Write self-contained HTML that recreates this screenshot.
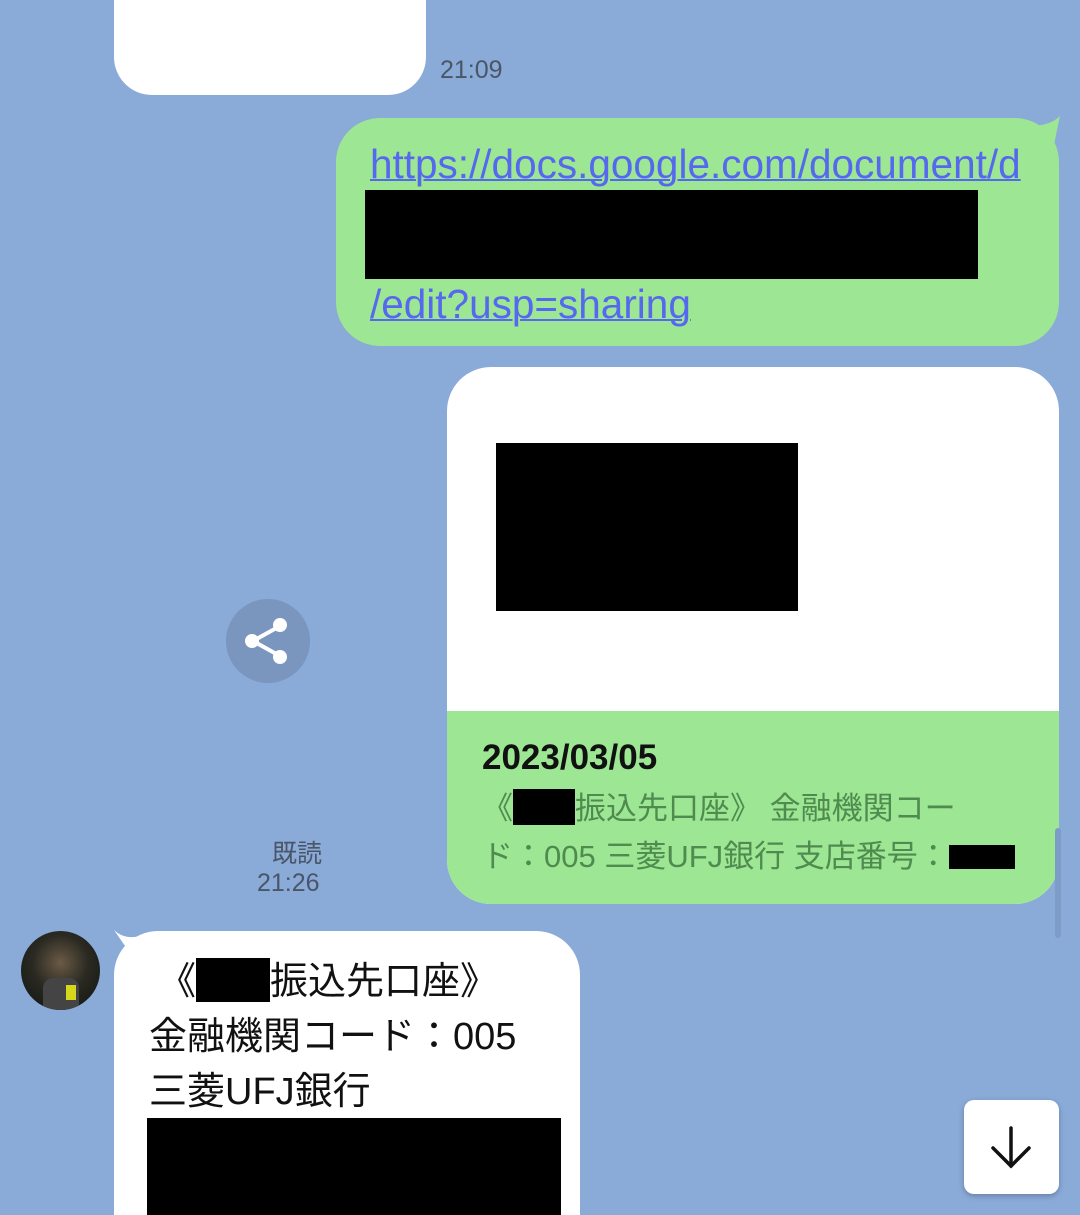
<!DOCTYPE html>
<html style="overflow:hidden;height:1215px"><head><meta charset="utf-8"><style>
*{margin:0;padding:0;box-sizing:border-box}
body{width:1080px;height:1215px;overflow:hidden;background:#8aaad8;font-family:"Liberation Sans","Noto Sans CJK JP",sans-serif;position:relative}
.a{position:absolute}
.blk{position:absolute;background:#000}
</style></head><body>
<div class="a" style="left:114px;top:-40px;width:312px;height:135px;background:#fff;border-radius:38px"></div>
<div class="a" style="left:440px;top:56px;font-size:25px;color:#4a5668">21:09</div>

<div class="a" style="left:336px;top:118px;width:723px;height:228px;background:#9de693;border-radius:44px"></div>
<svg class="a" style="left:1030px;top:116px" width="32" height="30"><path d="M0 10 Q20 10 30 0 Q26 18 24 30 Z" fill="#9de693"/></svg>
<div class="a" style="left:370px;top:141px;font-size:40.5px;color:#5568ef;text-decoration:underline;text-decoration-thickness:2px;white-space:nowrap">https://docs.google.com/document/d</div>
<div class="blk" style="left:365px;top:190px;width:613px;height:89px"></div>
<div class="a" style="left:370px;top:281px;font-size:40.5px;color:#5568ef;text-decoration:underline;text-decoration-thickness:2px;white-space:nowrap">/edit?usp=sharing</div>

<div class="a" style="left:447px;top:367px;width:612px;height:537px;background:#fff;border-radius:44px;overflow:hidden">
 <div class="a" style="left:0;top:344px;width:612px;height:193px;background:#9de693"></div>
</div>
<div class="blk" style="left:496px;top:443px;width:302px;height:168px"></div>
<div class="a" style="left:482px;top:738px;font-size:35px;font-weight:bold;color:#111">2023/03/05</div>
<div class="a" style="left:482px;top:783px;font-size:31px;color:#4f8a4f;white-space:nowrap">《<span style="display:inline-block;width:62px;height:36px;background:#000;vertical-align:-6px"></span>振込先口座》 金融機関コー</div>
<div class="a" style="left:482px;top:831px;font-size:31px;color:#4f8a4f;white-space:nowrap">ド：005 三菱UFJ銀行 支店番号：<span style="display:inline-block;width:66px;height:24px;background:#000;vertical-align:-2px"></span></div>
<div class="a" style="left:1055px;top:828px;width:6px;height:110px;background:#7d9cc8;border-radius:3px"></div>

<div class="a" style="left:226px;top:599px;width:84px;height:84px;border-radius:50%;background:#7a96bf"></div>
<svg class="a" style="left:226px;top:599px" width="84" height="84"><g fill="#fff" stroke="#fff" stroke-width="4"><line x1="27" y1="42" x2="54" y2="27"/><line x1="27" y1="42" x2="54" y2="57"/><circle cx="26" cy="42" r="5"/><circle cx="54" cy="26" r="5"/><circle cx="54" cy="58" r="5"/></g></svg>

<div class="a" style="left:272px;top:834px;font-size:25px;color:#4a5668">既読</div>
<div class="a" style="left:257px;top:869px;font-size:25px;color:#4a5668">21:26</div>

<div class="a" style="left:21px;top:931px;width:79px;height:79px;border-radius:50%;background:radial-gradient(circle at 50% 40%,#6b5a45 0%,#2a2a22 45%,#111 100%);overflow:hidden">
<div class="a" style="left:22px;top:47px;width:36px;height:32px;background:#444;border-radius:10px 10px 0 0"></div>
<div class="a" style="left:45px;top:54px;width:10px;height:15px;background:#d6d61a"></div>
</div>

<div class="a" style="left:114px;top:931px;width:466px;height:284px;background:#fff;border-radius:44px 44px 0 0"></div>
<svg class="a" style="left:112px;top:930px" width="30" height="30"><path d="M2 0 Q12 10 28 6 L20 26 Z" fill="#fff"/></svg>
<div class="a" style="left:158px;top:950px;font-size:38px;color:#111;white-space:nowrap">《<span style="display:inline-block;width:74px;height:44px;background:#000;vertical-align:-8px"></span>振込先口座》</div>
<div class="a" style="left:149px;top:1005px;font-size:38px;color:#111;white-space:nowrap">金融機関コード：005</div>
<div class="a" style="left:149px;top:1060px;font-size:38px;color:#111;white-space:nowrap">三菱UFJ銀行</div>
<div class="blk" style="left:147px;top:1118px;width:414px;height:97px"></div>

<div class="a" style="left:964px;top:1100px;width:95px;height:94px;background:#fff;border-radius:10px;box-shadow:0 2px 6px rgba(0,0,0,.25)"></div>
<svg class="a" style="left:964px;top:1100px" width="95" height="94"><g fill="none" stroke="#111" stroke-width="3.5" stroke-linecap="round"><line x1="47" y1="28" x2="47" y2="66"/><polyline points="29,48 47,66 65,48"/></g></svg>
</body></html>
